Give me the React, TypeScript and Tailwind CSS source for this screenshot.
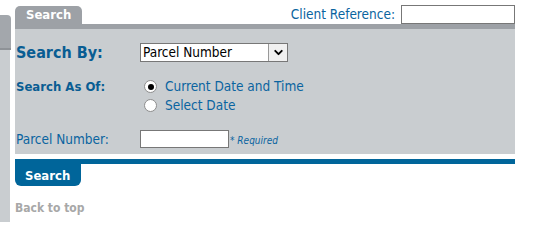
import React from 'react';
import { ChevronDown } from 'lucide-react';

const font = { fontFamily: '"DejaVu Sans Condensed", "Liberation Sans", sans-serif' };

function Radio({ checked }: { checked?: boolean }) {
  return (
    <span className="w-[13px] h-[13px] rounded-full border border-[#8d8d8d] bg-white flex items-center justify-center shrink-0">
      {checked && <span className="w-[6px] h-[6px] rounded-full bg-black" />}
    </span>
  );
}

function App() {
  return (
    <div className="flex w-[541px] h-[222px] bg-white overflow-hidden" style={font}>
      {/* left strip */}
      <div className="w-[10px] flex flex-col">
        <div className="h-[15px]" />
        <div className="w-[11px] h-[35px] bg-[#a3a7ac] rounded-tr-[4px] border-b-2 border-[#8e9297]" />
        <div className="flex-1 bg-[#c9cdd0]" />
      </div>

      <div className="ml-[5px] w-[500px] flex flex-col">
        {/* header */}
        <div className="h-[24px] flex justify-between">
          <div className="self-end w-[67px] h-[18px] bg-[#9da1a6] rounded-t-[5px] pl-[11px] text-white font-bold text-[13px] leading-[18px]">
            Search
          </div>
          <div className="flex items-center h-[19px] mt-[5px] gap-[6px]">
            <span className="text-[13.5px] text-[#0a64a0]">Client Reference:</span>
            <div className="w-[114px] h-[19px] border border-[#777] bg-white" />
          </div>
        </div>
        <div className="h-[5px] bg-[#9da1a6]" />

        {/* panel */}
        <div className="h-[125px] bg-[#c9cdd0] pl-[1px] flex flex-col">
          <div className="flex items-center h-[19px] mt-[14px]">
            <span className="w-[124px] text-[16px] font-bold text-[#095d93]">Search By:</span>
            <div className="w-[148px] h-[19px] border border-[#777] bg-white flex">
              <span className="flex-1 pl-[2px] text-[13.5px] leading-[17px] text-black">Parcel Number</span>
              <span className="w-[19px] border-l border-[#999] bg-[#f0f0f0] flex items-center justify-center">
                <ChevronDown className="w-[13px] h-[13px] text-black" strokeWidth={3.5} />
              </span>
            </div>
          </div>

          <div className="flex mt-[15px]">
            <span className="w-[124px] h-[19px] leading-[19px] text-[13px] font-bold text-[#095d93]">Search As Of:</span>
            <div className="flex flex-col">
              <div className="flex items-center h-[19px] pl-[4px] gap-[8px]">
                <Radio checked />
                <span className="text-[13.5px] text-[#0a64a0]">Current Date and Time</span>
              </div>
              <div className="flex items-center h-[19px] pl-[4px] gap-[8px]">
                <Radio />
                <span className="text-[13.5px] text-[#0a64a0]">Select Date</span>
              </div>
            </div>
          </div>

          <div className="flex items-center h-[18px] mt-[15px]">
            <span className="w-[124px] text-[13.5px] text-[#0a64a0]">Parcel Number:</span>
            <div className="w-[89px] h-[18px] border border-[#777] bg-white" />
            <span className="ml-[1px] mt-[3px] text-[10px] italic text-[#0a64a0]">* Required</span>
          </div>
        </div>

        <div className="h-[5px] mt-[5px] bg-[#00659a]" />
        <div className="w-[66px] h-[22px] bg-[#00659a] rounded-b-[6px] pl-[10px] text-white font-bold text-[13px] leading-[23px]">
          Search
        </div>

        <div className="mt-[13px] text-[12px] font-bold text-[#a8a8a8]">Back to top</div>
      </div>
    </div>
  );
}

export default App;
